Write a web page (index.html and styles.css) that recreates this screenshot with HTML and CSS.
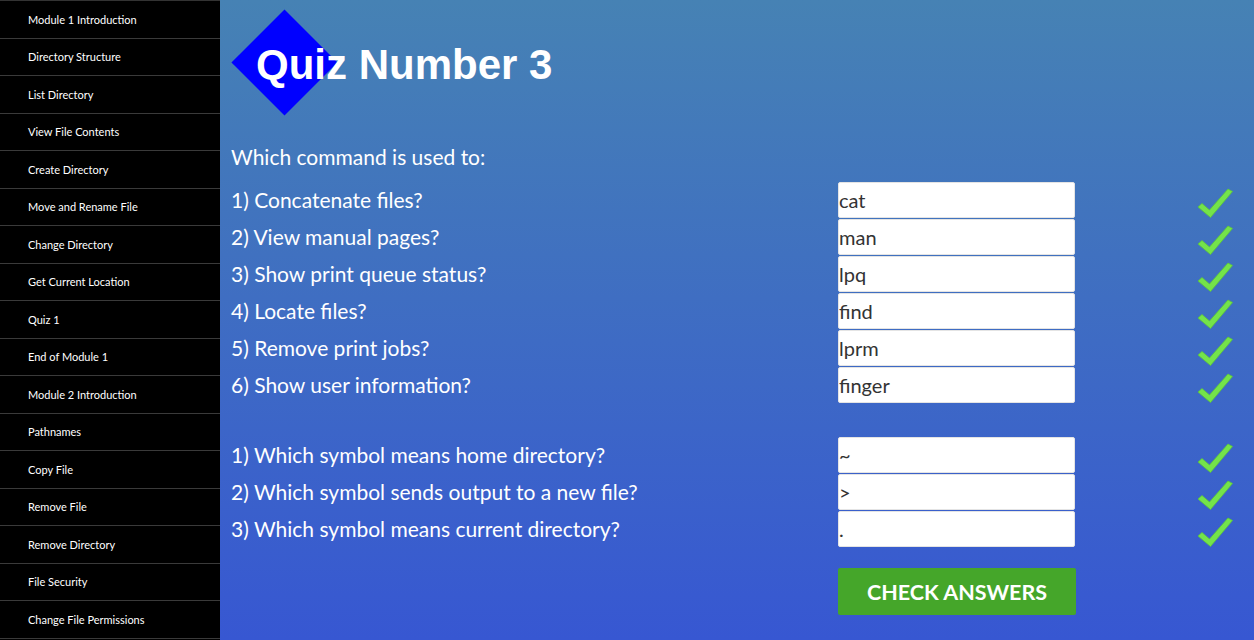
FILE: index.html
```html
<!DOCTYPE html>
<html lang="en">
<head>
<meta charset="utf-8">
<title>Quiz Number 3</title>
<link rel="stylesheet" href="styles.css">
</head>
<body>
<div class="page">
  <nav class="sidebar">
    <a class="nav-item" href="#">Module 1 Introduction</a>
    <a class="nav-item" href="#">Directory Structure</a>
    <a class="nav-item" href="#">List Directory</a>
    <a class="nav-item" href="#">View File Contents</a>
    <a class="nav-item" href="#">Create Directory</a>
    <a class="nav-item" href="#">Move and Rename File</a>
    <a class="nav-item" href="#">Change Directory</a>
    <a class="nav-item" href="#">Get Current Location</a>
    <a class="nav-item" href="#">Quiz 1</a>
    <a class="nav-item" href="#">End of Module 1</a>
    <a class="nav-item" href="#">Module 2 Introduction</a>
    <a class="nav-item" href="#">Pathnames</a>
    <a class="nav-item" href="#">Copy File</a>
    <a class="nav-item" href="#">Remove File</a>
    <a class="nav-item" href="#">Remove Directory</a>
    <a class="nav-item" href="#">File Security</a>
    <a class="nav-item" href="#">Change File Permissions</a>
  </nav>
  <main class="main">
    <h1 class="title">Quiz Number 3</h1>
    <p class="intro">Which command is used to:</p>
    <div class="group">
      <label class="q">1) Concatenate files?</label><input class="answer" value="cat"><span class="check"><svg viewBox="0 0 36 30" width="36" height="30"><path d="M1 19 L5 15.5 L12.5 22 L31 1 L35.5 3.5 L13.5 29.5 Z" fill="#74e34a" stroke="#5cc63a" stroke-width="0.8" stroke-linejoin="round"/></svg></span>
      <label class="q">2) View manual pages?</label><input class="answer" value="man"><span class="check"><svg viewBox="0 0 36 30" width="36" height="30"><path d="M1 19 L5 15.5 L12.5 22 L31 1 L35.5 3.5 L13.5 29.5 Z" fill="#74e34a" stroke="#5cc63a" stroke-width="0.8" stroke-linejoin="round"/></svg></span>
      <label class="q">3) Show print queue status?</label><input class="answer" value="lpq"><span class="check"><svg viewBox="0 0 36 30" width="36" height="30"><path d="M1 19 L5 15.5 L12.5 22 L31 1 L35.5 3.5 L13.5 29.5 Z" fill="#74e34a" stroke="#5cc63a" stroke-width="0.8" stroke-linejoin="round"/></svg></span>
      <label class="q">4) Locate files?</label><input class="answer" value="find"><span class="check"><svg viewBox="0 0 36 30" width="36" height="30"><path d="M1 19 L5 15.5 L12.5 22 L31 1 L35.5 3.5 L13.5 29.5 Z" fill="#74e34a" stroke="#5cc63a" stroke-width="0.8" stroke-linejoin="round"/></svg></span>
      <label class="q">5) Remove print jobs?</label><input class="answer" value="lprm"><span class="check"><svg viewBox="0 0 36 30" width="36" height="30"><path d="M1 19 L5 15.5 L12.5 22 L31 1 L35.5 3.5 L13.5 29.5 Z" fill="#74e34a" stroke="#5cc63a" stroke-width="0.8" stroke-linejoin="round"/></svg></span>
      <label class="q">6) Show user information?</label><input class="answer" value="finger"><span class="check"><svg viewBox="0 0 36 30" width="36" height="30"><path d="M1 19 L5 15.5 L12.5 22 L31 1 L35.5 3.5 L13.5 29.5 Z" fill="#74e34a" stroke="#5cc63a" stroke-width="0.8" stroke-linejoin="round"/></svg></span>
    </div>
    <div class="group group-2">
      <label class="q">1) Which symbol means home directory?</label><input class="answer" value="~"><span class="check"><svg viewBox="0 0 36 30" width="36" height="30"><path d="M1 19 L5 15.5 L12.5 22 L31 1 L35.5 3.5 L13.5 29.5 Z" fill="#74e34a" stroke="#5cc63a" stroke-width="0.8" stroke-linejoin="round"/></svg></span>
      <label class="q">2) Which symbol sends output to a new file?</label><input class="answer" value="&gt;"><span class="check"><svg viewBox="0 0 36 30" width="36" height="30"><path d="M1 19 L5 15.5 L12.5 22 L31 1 L35.5 3.5 L13.5 29.5 Z" fill="#74e34a" stroke="#5cc63a" stroke-width="0.8" stroke-linejoin="round"/></svg></span>
      <label class="q">3) Which symbol means current directory?</label><input class="answer" value="."><span class="check"><svg viewBox="0 0 36 30" width="36" height="30"><path d="M1 19 L5 15.5 L12.5 22 L31 1 L35.5 3.5 L13.5 29.5 Z" fill="#74e34a" stroke="#5cc63a" stroke-width="0.8" stroke-linejoin="round"/></svg></span>
    </div>
    <div class="actions">
      <button class="btn-check" type="button">CHECK ANSWERS</button>
    </div>
  </main>
</div>
</body>
</html>
```
FILE: styles.css
```css
html, body {
  margin: 0;
  padding: 0;
  height: 100%;
}
body {
  font-family: Lato, "Open Sans", sans-serif;
  overflow: hidden;
}
.page {
  display: flex;
  height: 640px;
}
.sidebar {
  width: 220px;
  flex: 0 0 220px;
  background: #000;
  display: flex;
  flex-direction: column;
  border-top: 1px solid #333;
  box-sizing: border-box;
}
.nav-item {
  display: flex;
  align-items: center;
  height: 37.5px;
  box-sizing: border-box;
  padding-left: 28px;
  border-bottom: 1px solid #3a3a3a;
  color: #fff;
  text-decoration: none;
  font-size: 11px;
  flex: 0 0 auto;
}
.main {
  flex: 1;
  background: linear-gradient(#4682b4, #3757d2);
  padding: 40px 0 0 11px;
  box-sizing: border-box;
  color: #fff;
}
.title {
  position: relative;
  margin: 0 0 0 25px;
  font-family: "Liberation Sans", Arial, sans-serif;
  font-weight: bold;
  font-size: 42px;
  line-height: 50px;
  z-index: 0;
}
.title::before {
  content: "";
  position: absolute;
  left: -9px;
  top: -15px;
  width: 75px;
  height: 75px;
  background: #0000ff;
  transform: rotate(45deg);
  z-index: -1;
}
.intro {
  margin: 55px 0 0 0;
  font-size: 21px;
  line-height: 24px;
}
.group {
  display: grid;
  grid-template-columns: 607px 237px 1fr;
  grid-auto-rows: 36px;
  row-gap: 1px;
  margin-top: 13px;
  align-items: center;
}
.group-2 {
  margin-top: 34px;
}
.q {
  font-size: 21px;
  line-height: 36px;
}
.answer {
  height: 36px;
  width: 237px;
  box-sizing: border-box;
  border: 1px solid #e4e4e4;
  border-radius: 2px;
  padding: 0 1px 0 0;
  margin: 0;
  font-family: Lato, sans-serif;
  font-size: 20px;
  color: #333;
  background: #fff;
  outline: none;
}
.check {
  display: flex;
  padding-left: 122px;
  padding-top: 6px;
}
.check svg {
  display: block;
}
.actions {
  margin-top: 21px;
  padding-left: 607px;
}
.btn-check {
  width: 238px;
  height: 47px;
  border: none;
  border-radius: 2px;
  background: #45a62a;
  color: #fff;
  font-family: Lato, sans-serif;
  font-weight: bold;
  font-size: 21.5px;
  padding: 0;
  cursor: pointer;
}
```
